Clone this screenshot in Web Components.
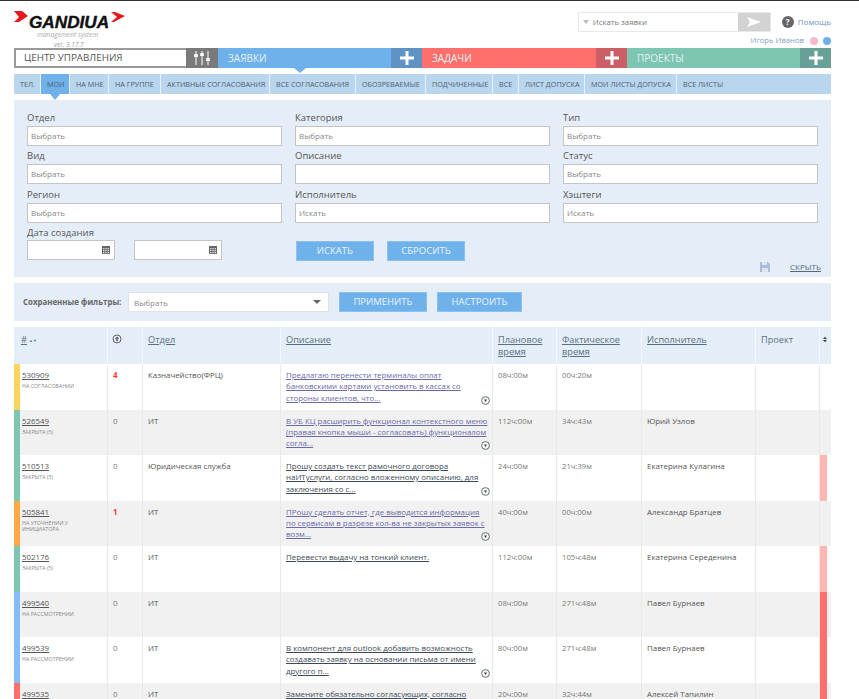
<!DOCTYPE html>
<html lang="ru">
<head>
<meta charset="utf-8">
<title>Gandiva</title>
<style>
  html, body { margin: 0; padding: 0; height: 699px; overflow: hidden; background: #fff; }
  body { font-family: "Open Sans", "Noto Sans", sans-serif; color: #555; }
  #page { display: block; padding: 0 28px 0 14px; border-top: 1px solid #333; }
</style>
</head>
<body>
<div id="page">
  <gn-header></gn-header>
  <gn-nav></gn-nav>
  <gn-tabs></gn-tabs>
  <gn-filter-panel></gn-filter-panel>
  <gn-saved-filters></gn-saved-filters>
  <gn-task-table></gn-task-table>
</div>

<script>
class GnElement extends HTMLElement {
  constructor() {
    super();
    this.shadowDOM = this.attachShadow({ mode: 'open' });
  }

  connectedCallback() {
    this.render();
  }
}

class GnHeader extends GnElement {
  render() {
    this.shadowDOM.innerHTML = `
      <style>
        :host { display: flex; justify-content: space-between; height: 47px; }
        .logo { display: flex; flex-direction: column; width: 111px; }
        .brand { display: flex; height: 29px; }
        .brand svg { flex: none; }
        .left { margin-top: 10px; }
        .right { margin: 11px 0 0 1px; }
        .name {
          font: italic 900 16.5px/17px "Liberation Sans", sans-serif;
          color: #111;
          margin: 13px 0 0 1px;
          transform: scaleX(1.04);
          transform-origin: left;
          width: 81px;
          -webkit-text-stroke: 0.4px #111;
        }
        .sys { font: italic 6.7px/8px "Open Sans", sans-serif; color: #aaa; margin: 1px 0 0 23px; }
        .ver { font: italic 6.5px/8px "Open Sans", sans-serif; color: #999; margin: 2px 0 0 40px; }
        .tools { width: 253px; display: flex; flex-direction: column; align-items: flex-end; }
        .top { display: flex; align-items: center; margin-top: 10px; height: 21px; }
        .search { display: flex; width: 193px; height: 20px; border: 1px solid #e8e8e8; box-sizing: border-box; background: #fff; }
        .search span { flex: 1; font-size: 7.8px; line-height: 18px; color: #777; display: flex; align-items: center; }
        .search i { width: 0; height: 0; border: 3px solid transparent; border-top: 4px solid #bbb; margin: 3px 4px 0 4px; }
        .send { width: 32px; background: #d2d2d2; display: flex; align-items: center; justify-content: center; }
        .help { display: flex; align-items: center; margin-left: 11px; font-size: 8px; color: #6b93bb; }
        .help b { width: 12px; height: 12px; border-radius: 50%; background: #666; color: #fff; font-size: 8px; line-height: 12px; text-align: center; margin-right: 4px; }
        .user { display: flex; align-items: center; font-size: 7.7px; line-height: 11px; color: #7f9fc0; margin-top: 3px; }
        .dot { width: 8px; height: 8px; border-radius: 50%; margin: 1px 0 0 6px; background: #f9b9cb; }
        .dot.blue { background: #6fb1ea; margin-left: 5px; }
      </style>
      <div class="logo">
        <div class="brand">
          <svg class="left" width="14" height="12" viewBox="0 0 14 12"><polygon points="0,0 8,0 14,5 5,11 0,11 5,6" fill="#e8191c"/></svg>
          <span class="name">GANDIUA</span>
          <svg class="right" width="14" height="10" viewBox="0 0 14 10"><polygon points="0,0 4,0 14,4 3,10 0,10 6,5" fill="#e8191c"/></svg>
        </div>
        <div class="sys">management system</div>
        <div class="ver">ver. 3.17.7</div>
      </div>
      <div class="tools">
        <div class="top">
          <div class="search">
            <span><i></i>Искать заявки</span>
            <div class="send">
              <svg width="14" height="10" viewBox="0 0 14 10"><polygon points="0,0 14,5 0,10 3,5" fill="#fff"/></svg>
            </div>
          </div>
          <div class="help"><b>?</b>Помощь</div>
        </div>
        <div class="user">Игорь Иванов<span class="dot"></span><span class="dot blue"></span></div>
      </div>
    `;
  }
}

class GnNavSection extends GnElement {
  render() {
    const color = this.getAttribute('color');
    const dark = this.getAttribute('dark');
    this.shadowDOM.innerHTML = `
      <style>
        :host { display: flex; height: 20px; position: relative; background: ${color}; }
        .title { flex: 1; padding-left: 10px; font-size: 10px; line-height: 20px; color: #e3f0f4; }
        .add { width: 31px; background: ${dark}; display: flex; align-items: center; justify-content: center; }
        .caret {
          position: absolute; left: 76px; bottom: -5px; width: 0; height: 0;
          border: 6px solid transparent; border-bottom: 0; border-top: 5px solid ${color};
        }
      </style>
      <div class="title"><slot></slot></div>
      ${this.hasAttribute('active') ? '<div class="caret"></div>' : ''}
      <div class="add">
        <svg width="14" height="14" viewBox="0 0 14 14"><path d="M7 0v14M0 7h14" stroke="#fff" stroke-width="3"/></svg>
      </div>
    `;
  }
}

class GnNav extends GnElement {
  render() {
    this.shadowDOM.innerHTML = `
      <style>
        :host { display: grid; grid-template-columns: 172px 32px 204px 205px 204px; height: 20px; }
        .home {
          border: 2px solid #9a9a9a; border-right: 0; box-sizing: border-box; background: #fff;
          padding-left: 8px; font-size: 9.8px; line-height: 16px; color: #555;
        }
        .cfg { background: #7a7a7a; display: flex; align-items: center; justify-content: center; }
      </style>
      <div class="home">ЦЕНТР УПРАВЛЕНИЯ</div>
      <div class="cfg">
        <svg width="18" height="14" viewBox="0 0 18 14">
          <path d="M3 0v14M9 0v14M15 0v14" stroke="#fff" stroke-width="1"/>
          <path d="M1.2 3h3.6v3H1.2zM7.2 2h3.6v3H7.2zM13.2 7h3.6v3h-3.6z" fill="#fff"/>
        </svg>
      </div>
      <gn-nav-section color="#6fb1ea" dark="#5f93c5" active>ЗАЯВКИ</gn-nav-section>
      <gn-nav-section color="#ff6f6b" dark="#cc5f66">ЗАДАЧИ</gn-nav-section>
      <gn-nav-section color="#7dc6b2" dark="#67a097">ПРОЕКТЫ</gn-nav-section>
    `;
  }
}

class GnTabs extends GnElement {
  render() {
    const tabs = [
      ['ТЕЛ.', 27], ['МОИ', 29], ['НА МНЕ', 39], ['НА ГРУППЕ', 52], ['АКТИВНЫЕ СОГЛАСОВАНИЯ', 109],
      ['ВСЕ СОГЛАСОВАНИЯ', 86], ['ОБОЗРЕВАЕМЫЕ', 70], ['ПОДЧИНЕННЫЕ', 67], ['ВСЕ', 26],
      ['ЛИСТ ДОПУСКА', 66], ['МОИ ЛИСТЫ ДОПУСКА', 92], ['ВСЕ ЛИСТЫ', 154],
    ];
    this.shadowDOM.innerHTML = `
      <style>
        :host { display: flex; height: 20px; margin-top: 6px; }
        .tab {
          box-sizing: border-box; background: #bad5ee; border-right: 1px solid #e8f1f9;
          font-size: 7.2px; line-height: 20px; color: #4d6070; padding-left: 6px; white-space: nowrap; position: relative;
        }
        .tab:last-child { border-right: 0; }
        .tab.on { background: #6fb1ea; }
        .tab.on::after {
          content: ''; position: absolute; left: 9px; top: 20px; width: 0; height: 0;
          border: 5px solid transparent; border-bottom: 0; border-top: 6px solid #6fb1ea;
        }
      </style>
      ${tabs.map(([text, width]) => `<div class="tab${text === 'МОИ' ? ' on' : ''}" style="width:${width}px">${text}</div>`).join('')}
    `;
  }
}

class GnField extends GnElement {
  render() {
    const label = this.getAttribute('label');
    const hint = this.getAttribute('hint') || '';
    this.shadowDOM.innerHTML = `
      <style>
        :host { display: block; height: 38.3px; }
        label { display: block; font-size: 9.5px; line-height: 12px; height: 14px; color: #555; }
        .box {
          box-sizing: border-box; height: 20px; border: 1px solid #c4c4c4; background: #fff;
          padding-left: 3px; font-size: 8px; line-height: 18px; color: #888;
        }
      </style>
      <label>${label}</label>
      <div class="box">${hint}</div>
    `;
  }
}

class GnDate extends GnElement {
  render() {
    this.shadowDOM.innerHTML = `
      <style>
        :host { display: flex; align-items: center; justify-content: flex-end; box-sizing: border-box; height: 20px; border: 1px solid #c4c4c4; background: #fff; padding-right: 4px; }
      </style>
      <svg width="8" height="9" viewBox="0 0 8 9">
        <path d="M0 1h8v8H0z" fill="#666"/>
        <path d="M1 3h1.4v1.2H1zM3.3 3h1.4v1.2H3.3zM5.6 3H7v1.2H5.6zM1 5h1.4v1.2H1zM3.3 5h1.4v1.2H3.3zM5.6 5H7v1.2H5.6zM1 7h1.4v1.2H1zM3.3 7h1.4v1.2H3.3zM5.6 7H7v1.2H5.6z" fill="#ddd"/>
      </svg>
    `;
  }
}

class GnButton extends GnElement {
  render() {
    this.shadowDOM.innerHTML = `
      <style>
        :host {
          display: block; box-sizing: border-box; height: 20px; background: #6fb1ea; border: 1px solid #8cc0ee;
          color: #e9f3fb; font-size: 9.5px; line-height: 18px; text-align: center;
        }
      </style>
      <slot></slot>
    `;
  }
}

class GnFilterPanel extends GnElement {
  render() {
    const fields = [
      ['Отдел', 'Выбрать'], ['Категория', 'Выбрать'], ['Тип', 'Выбрать'],
      ['Вид', 'Выбрать'], ['Описание', ''], ['Статус', 'Выбрать'],
      ['Регион', 'Выбрать'], ['Исполнитель', 'Искать'], ['Хэштеги', 'Искать'],
    ];
    this.shadowDOM.innerHTML = `
      <style>
        :host { display: block; box-sizing: border-box; height: 177px; margin-top: 6px; padding: 12px 13px 0; background: #e5eef8; position: relative; }
        .grid { display: grid; grid-template-columns: repeat(3, 255px); column-gap: 13px; }
        .bottom { display: grid; grid-template-columns: 255px 1fr; column-gap: 13px; }
        .dates { display: grid; grid-template-columns: 88px 88px; grid-template-rows: 13px 20px; column-gap: 19px; }
        .dates label { grid-column: 1 / 3; font-size: 9.5px; line-height: 12px; color: #555; }
        .actions { display: flex; gap: 13px; margin: 14px 0 0 1px; }
        gn-button { width: 78px; height: 20px; }
        .hide { position: absolute; right: 10px; bottom: 5px; display: flex; align-items: center; gap: 20px; font-size: 8px; color: #56687a; text-decoration: underline; }
      </style>
      <div class="grid">
        ${fields.map(([label, hint]) => `<gn-field label="${label}" hint="${hint}"></gn-field>`).join('')}
      </div>
      <div class="bottom">
        <div class="dates">
          <label>Дата создания</label>
          <gn-date></gn-date><gn-date></gn-date>
        </div>
        <div class="actions">
          <gn-button>ИСКАТЬ</gn-button>
          <gn-button>СБРОСИТЬ</gn-button>
        </div>
      </div>
      <div class="hide">
        <svg width="10" height="10" viewBox="0 0 10 10"><path d="M0 0h8l2 2v8H0z" fill="#a9bedb"/><path d="M2 0h5v3H2zM2 6h6v4H2z" fill="#dde7f3"/></svg>
        <span>СКРЫТЬ</span>
      </div>
    `;
  }
}

class GnSavedFilters extends GnElement {
  render() {
    this.shadowDOM.innerHTML = `
      <style>
        :host { display: flex; align-items: center; box-sizing: border-box; height: 38px; margin-top: 6px; padding-left: 9px; background: #e5eef8; }
        .label { width: 105px; font-size: 7.9px; font-weight: 700; color: #666; white-space: nowrap; }
        .select {
          box-sizing: border-box; width: 201px; height: 20px; border: 1px solid #e2e2e2; background: #fff;
          padding: 0 3px 0 5px; display: flex; align-items: center; justify-content: space-between; font-size: 8px; color: #888;
        }
        .select i { width: 0; height: 0; border: 3px solid transparent; border-bottom: 0; border-top: 4px solid #666; margin-right: 4px; border-left-width: 4px; border-right-width: 4px; }
        .apply { width: 88px; margin-left: 10px; }
        .setup { width: 85px; margin-left: 10px; }
      </style>
      <div class="label">Сохраненные фильтры:</div>
      <div class="select">Выбрать<i></i></div>
      <gn-button class="apply">ПРИМЕНИТЬ</gn-button>
      <gn-button class="setup">НАСТРОИТЬ</gn-button>
    `;
  }
}

const COLUMNS = '94px 35px 138px 212px 64px 85px 114px 64px 11px';

class GnTaskRow extends GnElement {
  render() {
    const attr = (name) => this.getAttribute(name) || '';
    const count = attr('count');
    const late = attr('late');
    this.shadowDOM.innerHTML = `
      <style>
        :host { display: grid; grid-template-columns: ${COLUMNS}; height: 45.5px; font-size: 7.9px; line-height: 11.3px; color: #555; }
        :host([alt]) { background: #f1f1f1; }
        .cell { box-sizing: border-box; border-right: 1.5px solid #e9e9e9; padding: 6px 3px 0 5px; position: relative; overflow: hidden; }
        .num { border-left: 6px solid ${attr('state')}; padding-left: 2px; }
        .num a { display: block; font-size: 7.9px; color: #555; text-decoration: underline; }
        .num small { display: block; font-size: 5.3px; line-height: 6.5px; color: #888; margin-top: 2px; }
        .count { color: ${count === '0' ? '#777' : '#f33'}; font-weight: ${count === '0' ? 400 : 700}; }
        .desc { color: ${attr('link')}; text-decoration: underline; overflow: visible; }
        .time { color: #777; font-size: 7.7px; }
        .more { position: absolute; right: 2px; bottom: 5px; }
        .late { border: 0; padding: 0; }
        .late div { width: 6.5px; height: 100%; background: ${late}; }
      </style>
      <div class="cell num"><a>${attr('num')}</a><small>${attr('status')}</small></div>
      <div class="cell count">${count}</div>
      <div class="cell">${attr('dept')}</div>
      <div class="cell desc"><slot></slot>
        ${this.hasAttribute('more') ? `<svg class="more" width="9" height="9" viewBox="0 0 9 9"><circle cx="4.5" cy="4.5" r="3.9" fill="#f4f4f4" stroke="#566" stroke-width="0.9"/><path d="M3 3.4h3L4.5 6z" fill="#445"/></svg>` : ''}
      </div>
      <div class="cell time">${attr('plan')}</div>
      <div class="cell time">${attr('fact')}</div>
      <div class="cell">${attr('who')}</div>
      <div class="cell"></div>
      <div class="cell late">${late ? '<div></div>' : ''}</div>
    `;
  }
}

class GnTaskTable extends GnElement {
  render() {
    this.shadowDOM.innerHTML = `
      <style>
        :host { display: block; margin-top: 6px; }
        .head { display: grid; grid-template-columns: ${COLUMNS}; height: 37px; background: #e3eef9; font-size: 9.2px; line-height: 11.5px; color: #5d6f7f; }
        .head div { box-sizing: border-box; border-right: 1.5px solid #f4f8fc; padding: 7px 5px 0; }
        .head div:last-child { border-right: 0; padding-left: 3px; }
        .head u { text-underline-offset: 1px; }
        .first { padding-left: 7px !important; }
        .sort { font-size: 4px; vertical-align: 1px; margin-left: 2px; }
        .icon { padding-left: 4px !important; }
      </style>
      <div class="head">
        <div class="first"><u>#</u><span class="sort">▲▼</span></div>
        <div class="icon">
          <svg width="10" height="10" viewBox="0 0 10 10"><circle cx="5" cy="5" r="4" fill="none" stroke="#555" stroke-width="0.9"/><path d="M3 4.8L5 2.6l2 2.2H5.7v2.4H4.3V4.8z" fill="#555"/></svg>
        </div>
        <div><u>Отдел</u></div>
        <div><u>Описание</u></div>
        <div><u>Плановое время</u></div>
        <div><u>Фактическое время</u></div>
        <div><u>Исполнитель</u></div>
        <div>Проект</div>
        <div><svg width="4" height="7" viewBox="0 0 5 7"><path d="M2.5 0L5 3H0zM2.5 7L0 4h5z" fill="#444"/></svg></div>
      </div>
      <gn-task-row state="#ffd45e" num="530909" status="НА СОГЛАСОВАНИИ" count="4" dept="Казначейство(ФРЦ)" plan="08ч:00м" fact="00ч:20м" link="#6a6aa8" more>Предлагаю перенести терминалы оплат банковскими картами установить в кассах со стороны клиентов, что...</gn-task-row>
      <gn-task-row alt state="#7dc6b2" num="526549" status="ЗАКРЫТА (5)" count="0" dept="ИТ" plan="112ч:00м" fact="34ч:43м" who="Юрий Узлов" link="#6a6aa8" more>В УБ КЦ расширить функционал контекстного меню (правая кнопка мыши - согласовать) функционалом согла...</gn-task-row>
      <gn-task-row state="#7dc6b2" num="510513" status="ЗАКРЫТА (5)" count="0" dept="Юридическая служба" plan="24ч:00м" fact="21ч:39м" who="Екатерина Кулагина" link="#3d4a55" late="#ffb5b2" more>Прошу создать текст рамочного договора наИТуслуги, согласно вложенному описанию, для заключения со с...</gn-task-row>
      <gn-task-row alt state="#ffa946" num="505841" status="НА УТОЧНЕНИИ У ИНИЦИАТОРА" count="1" dept="ИТ" plan="40ч:00м" fact="00ч:00м" who="Александр Братцев" link="#6a6aa8" more>ПРошу сделать отчет, где выводится информация по сервисам в разрезе кол-ва не закрытых заявок с возм...</gn-task-row>
      <gn-task-row state="#7dc6b2" num="502176" status="ЗАКРЫТА (5)" count="0" dept="ИТ" plan="112ч:00м" fact="105ч:48м" who="Екатерина Середенина" link="#3d4a55" late="#ffb5b2">Перевести выдачу на тонкий клиент.</gn-task-row>
      <gn-task-row alt state="#84bdfb" num="499540" status="НА РАССМОТРЕНИИ" count="0" dept="ИТ" plan="08ч:00м" fact="271ч:48м" who="Павел Бурнаев" late="#ff6f6b"></gn-task-row>
      <gn-task-row state="#84bdfb" num="499539" status="НА РАССМОТРЕНИИ" count="0" dept="ИТ" plan="80ч:00м" fact="271ч:48м" who="Павел Бурнаев" link="#3d4a55" late="#ff6f6b" more>В компонент для outlook добавить возможность создавать заявку на основании письма от имени другого п...</gn-task-row>
      <gn-task-row alt state="#ff6f6b" num="499535" count="0" dept="ИТ" plan="20ч:00м" fact="32ч:44м" who="Алексей Тапилин" link="#3d4a55" late="#ff6f6b">Замените обязательно согласующих, согласно</gn-task-row>
    `;
  }
}

customElements.define('gn-header', GnHeader);
customElements.define('gn-nav-section', GnNavSection);
customElements.define('gn-nav', GnNav);
customElements.define('gn-tabs', GnTabs);
customElements.define('gn-field', GnField);
customElements.define('gn-date', GnDate);
customElements.define('gn-button', GnButton);
customElements.define('gn-filter-panel', GnFilterPanel);
customElements.define('gn-saved-filters', GnSavedFilters);
customElements.define('gn-task-row', GnTaskRow);
customElements.define('gn-task-table', GnTaskTable);
</script>
</body>
</html>
